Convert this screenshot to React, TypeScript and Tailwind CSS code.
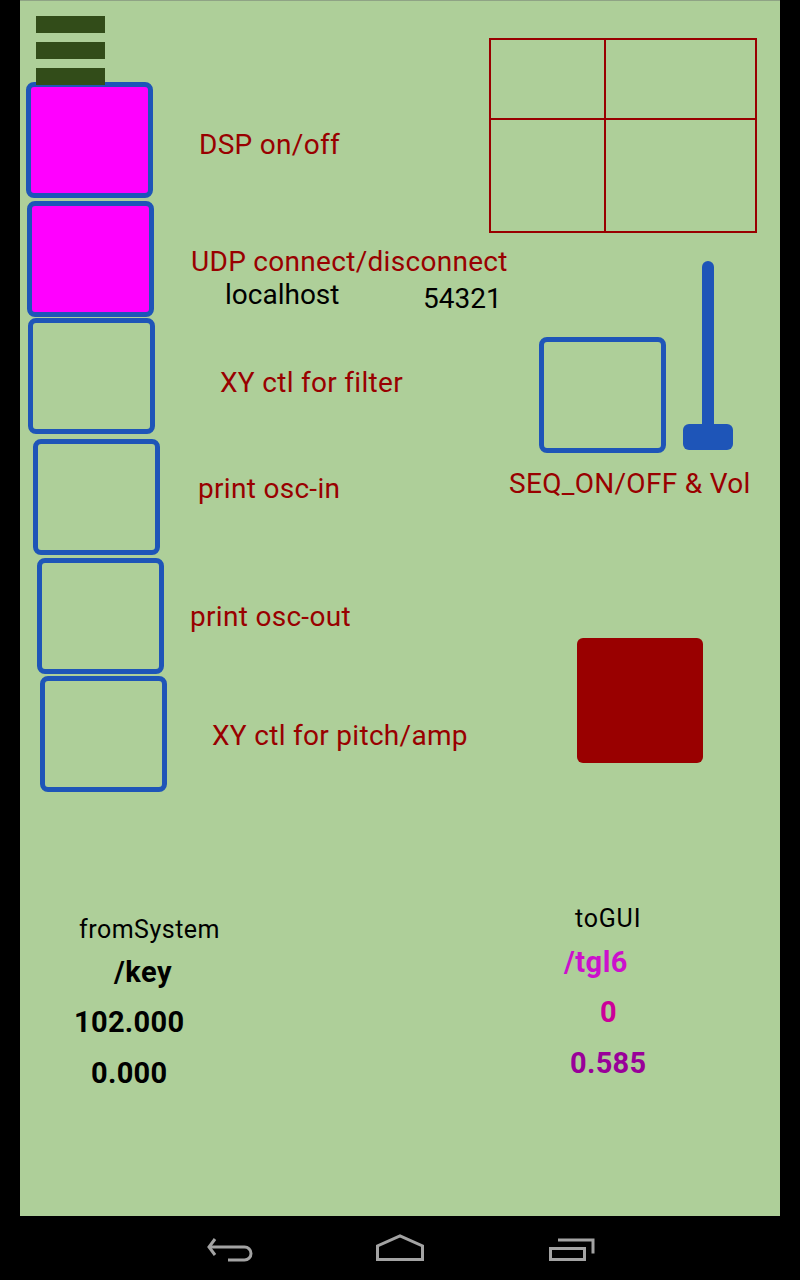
import type { ReactNode } from 'react';

const FONT = { fontFamily: 'Roboto, "Noto Sans", sans-serif' };

// Toggle boxes on the left edge of the patch, in canvas coordinates.
const TOGGLES = [
  { pos: 'left-[6px] top-[81px]', on: true },
  { pos: 'left-[7px] top-[200px]', on: true },
  { pos: 'left-[8px] top-[317px]', on: false },
  { pos: 'left-[13px] top-[438px]', on: false },
  { pos: 'left-[17px] top-[557px]', on: false },
  { pos: 'left-[20px] top-[675px]', on: false },
];

const LABELS = [
  { text: 'DSP on/off', pos: 'left-[179px] top-[130px]' },
  { text: 'UDP connect/disconnect', pos: 'left-[171px] top-[247px]' },
  { text: 'XY ctl for filter', pos: 'left-[200px] top-[368px]' },
  { text: 'print osc-in', pos: 'left-[178px] top-[474px]' },
  { text: 'print osc-out', pos: 'left-[170px] top-[602px]' },
  { text: 'XY ctl for pitch/amp', pos: 'left-[192px] top-[721px]' },
  { text: 'SEQ_ON/OFF & Vol', pos: 'left-[489px] top-[469px]' },
];

function Toggle({ pos, on }: { pos: string; on: boolean }) {
  return (
    <div
      className={`absolute ${pos} h-[116px] w-[127px] rounded-lg border-[5px] border-[#1e55b8] ${
        on ? 'bg-[#ff00ff]' : ''
      }`}
    />
  );
}

function Text({
  pos,
  className,
  children,
}: {
  pos: string;
  className: string;
  children: ReactNode;
}) {
  return (
    <div className={`absolute ${pos} whitespace-nowrap leading-none ${className}`}>
      {children}
    </div>
  );
}

function NavBar() {
  const stroke = {
    fill: 'none',
    stroke: '#a3a3a3',
    strokeWidth: 3,
  };
  return (
    <nav className="flex h-16 items-center justify-center gap-[123px] bg-black">
      <svg width="48" height="28" viewBox="0 0 48 28">
        <path d="M10 5 L4 13 L10 21" {...stroke} />
        <path d="M4 13 H39.5 A6.5 6.5 0 0 1 39.5 26 H23" {...stroke} />
      </svg>
      <svg width="48" height="28" viewBox="0 0 48 28">
        <path d="M1.5 25.5 H46.5 V12 L24 2 L1.5 12 Z" {...stroke} />
      </svg>
      <svg width="48" height="28" viewBox="0 0 48 28">
        <rect x="3.5" y="14.5" width="34" height="11" {...stroke} />
        <path d="M11 6 H46 V19.5" {...stroke} />
      </svg>
    </nav>
  );
}

export default function App() {
  return (
    <div className="flex h-[1280px] w-[800px] flex-col bg-black" style={FONT}>
      <div className="flex flex-1">
        <div className="w-5" />
        {/* patch canvas: widgets sit at their patch coordinates */}
        <div className="relative flex-1 overflow-hidden border-t border-[#8fa385] bg-[#aecf99]">
          {TOGGLES.map((t, i) => (
            <Toggle key={i} pos={t.pos} on={t.on} />
          ))}

          {/* menu glyph */}
          <div className="absolute left-[16px] top-[15px] z-10 flex w-[69px] flex-col gap-[9px]">
            <div className="h-[17px] bg-[#324c19]" />
            <div className="h-[17px] bg-[#324c19]" />
            <div className="h-[17px] bg-[#324c19]" />
          </div>

          {/* XY pad */}
          <div className="absolute left-[469px] top-[37px] grid h-[195px] w-[268px] grid-cols-[115px_1fr] grid-rows-[80px_1fr] border-2 border-[#990000]">
            <div className="border-b-2 border-r-2 border-[#990000]" />
            <div className="border-b-2 border-[#990000]" />
            <div className="border-r-2 border-[#990000]" />
            <div />
          </div>

          {/* seq toggle + volume slider */}
          <div className="absolute left-[519px] top-[336px] h-[116px] w-[127px] rounded-lg border-[5px] border-[#1e55b8]" />
          <div className="absolute left-[682px] top-[260px] h-[176px] w-[12px] rounded-full bg-[#1e55b8]" />
          <div className="absolute left-[663px] top-[423px] h-[26px] w-[50px] rounded-md bg-[#1e55b8]" />

          {/* bang */}
          <div className="absolute left-[557px] top-[637px] h-[125px] w-[126px] rounded-md bg-[#990000]" />

          {LABELS.map((l) => (
            <Text
              key={l.text}
              pos={l.pos}
              className="text-[28px] tracking-[0.3px] text-[#990000]"
            >
              {l.text}
            </Text>
          ))}
          <Text pos="left-[205px] top-[280px]" className="text-[28px] text-black">
            localhost
          </Text>
          <Text pos="left-[403px] top-[284px]" className="text-[28px] text-black">
            54321
          </Text>

          <Text pos="left-[59px] top-[916px]" className="text-[25px] tracking-[0.5px] text-black">
            fromSystem
          </Text>
          <Text pos="left-[94px] top-[957px]" className="text-[29px] font-bold tracking-[0.5px] text-black">
            /key
          </Text>
          <Text pos="left-[54px] top-[1007px]" className="text-[29px] font-bold tracking-[0.3px] text-black">
            102.000
          </Text>
          <Text pos="left-[71px] top-[1058px]" className="text-[29px] font-bold tracking-[0.3px] text-black">
            0.000
          </Text>

          <Text pos="left-[555px] top-[905px]" className="text-[25px] tracking-[0.8px] text-black">
            toGUI
          </Text>
          <Text pos="left-[544px] top-[947px]" className="text-[29px] font-bold tracking-[0.5px] text-[#cc11cc]">
            /tgl6
          </Text>
          <Text pos="left-[580px] top-[997px]" className="text-[29px] font-bold text-[#cc0099]">
            0
          </Text>
          <Text pos="left-[550px] top-[1048px]" className="text-[29px] font-bold tracking-[0.3px] text-[#990099]">
            0.585
          </Text>
        </div>
        <div className="w-5" />
      </div>
      <NavBar />
    </div>
  );
}
